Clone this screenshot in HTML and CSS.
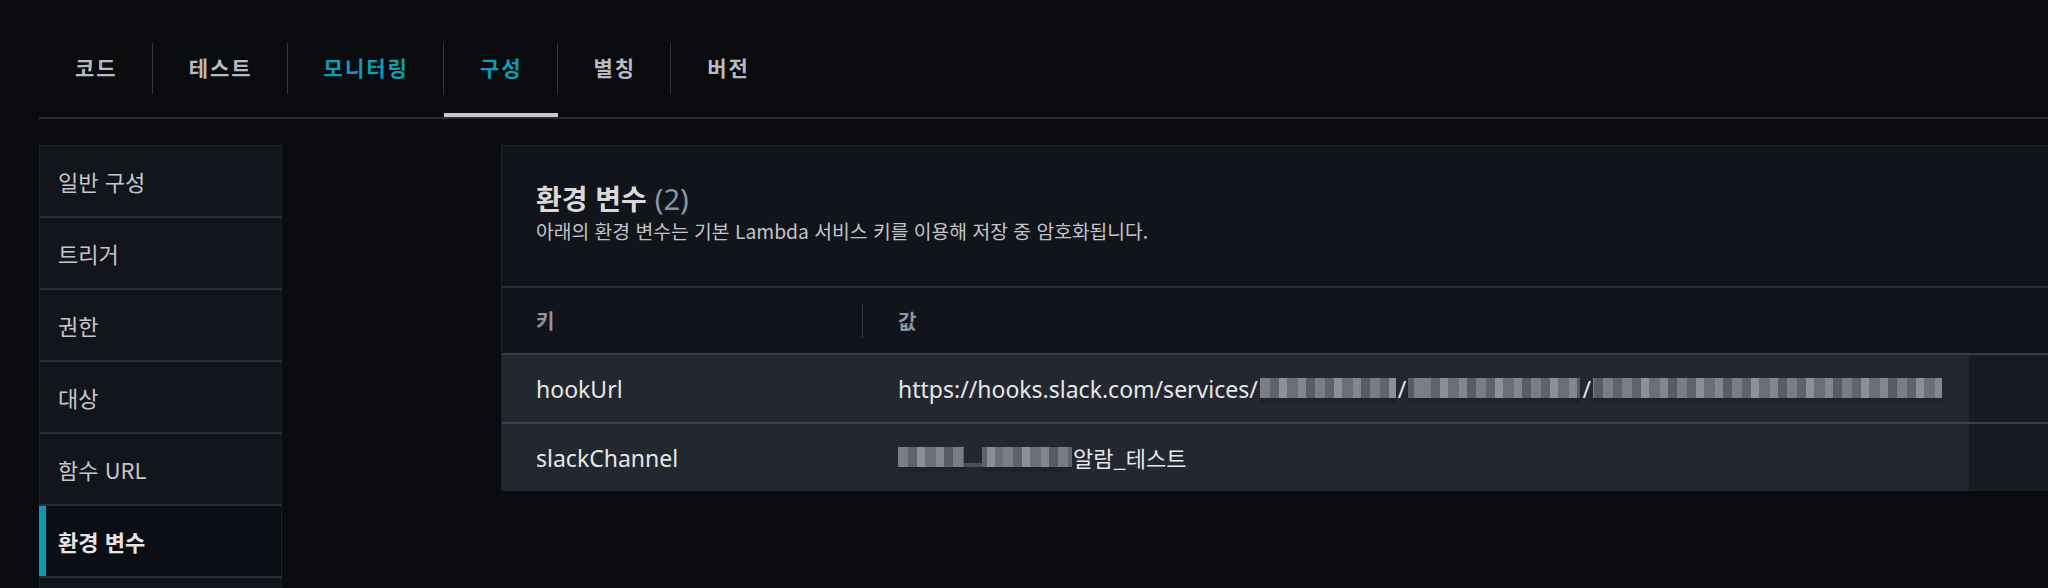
FILE: index.html
```html
<!DOCTYPE html>
<html lang="ko">
<head>
<meta charset="utf-8">
<title>환경 변수</title>
<link rel="stylesheet" href="styles.css">
</head>
<body>
<div class="page">
  <nav class="tabs">
    <div class="tab"><span class="tab-label">코드</span></div>
    <div class="tab"><span class="tab-label">테스트</span></div>
    <div class="tab link"><span class="tab-label">모니터링</span></div>
    <div class="tab link active"><span class="tab-label">구성</span></div>
    <div class="tab"><span class="tab-label">별칭</span></div>
    <div class="tab"><span class="tab-label">버전</span></div>
  </nav>
  <div class="content">
    <aside class="side">
      <div class="side-item">일반 구성</div>
      <div class="side-item">트리거</div>
      <div class="side-item">권한</div>
      <div class="side-item">대상</div>
      <div class="side-item">함수 URL</div>
      <div class="side-item active">환경 변수</div>
      <div class="side-item"></div>
    </aside>
    <section class="panel">
      <header class="panel-head">
        <h2 class="title">환경 변수 <span class="count">(2)</span></h2>
        <p class="desc">아래의 환경 변수는 기본 Lambda 서비스 키를 이용해 저장 중 암호화됩니다.</p>
      </header>
      <div class="table">
        <div class="thead">
          <div class="th key-col">키</div>
          <div class="th val-col">값</div>
        </div>
        <div class="row">
          <div class="row-inner">
            <div class="td key-col">hookUrl</div>
            <div class="td val-col">https://hooks.slack.com/services/<span class="mosaic m1"></span>/<span class="mosaic m2"></span>/<span class="mosaic m3"></span></div>
          </div>
        </div>
        <div class="row">
          <div class="row-inner">
            <div class="td key-col">slackChannel</div>
            <div class="td val-col"><span class="mosaic m4"></span><span class="gap"></span><span class="mosaic m5"></span><span class="ko">알람_테스트</span></div>
          </div>
        </div>
      </div>
    </section>
  </div>
</div>
</body>
</html>
```

FILE: styles.css
```css
html, body {
  margin: 0;
  background: #0a0b0f;
  overflow: hidden;
}

body {
  font-family: "Noto Sans CJK KR", "Noto Sans", sans-serif;
}

.page {
  padding-left: 39px;
  padding-top: 43px;
}

/* Tabs */
.tabs {
  display: flex;
  border-bottom: 2px solid #2a2c31;
}

.tab {
  height: 74px;
  box-sizing: border-box;
}

.tab-label {
  display: block;
  height: 51px;
  line-height: 49px;
  padding: 0 34px 0 36px;
  letter-spacing: 2px;
  border-right: 1px solid #33363c;
  font-size: 21px;
  font-weight: 700;
  color: #b9babf;
}

.tab:last-child .tab-label {
  border-right: none;
}

.tab.link .tab-label {
  color: #0e9db3;
}

.tab.active {
  box-shadow: inset 0 -4px 0 #c9cacd;
}

/* Content */
.content {
  display: flex;
  align-items: flex-start;
  margin-top: 26px;
}

.side {
  flex: none;
  width: 243px;
  box-sizing: border-box;
  border: 1px solid #1f2229;
  border-bottom: none;
}

.side-item {
  position: relative;
  height: 70px;
  display: flex;
  align-items: center;
  padding-left: 18px;
  border-bottom: 2px solid #2a2e36;
  background: #12151c;
  font-size: 22px;
  color: #c6c7ca;
}

.side-item.active {
  background: #0b0e14;
  font-weight: 700;
  color: #e4e4e6;
}

.side-item.active::before {
  content: "";
  position: absolute;
  left: -1px;
  top: 0;
  bottom: 0;
  width: 7px;
  background: #0a9bb0;
}

/* Panel */
.panel {
  flex: 1;
  margin-left: 219px;
  background: #11141b;
  border-left: 1px solid #1c1f26;
  border-top: 1px solid #1c1f26;
}

.panel-head {
  padding: 36px 34px 43px;
  border-bottom: 2px solid #2a2e36;
}

.title {
  margin: 0;
  font-size: 28px;
  line-height: 32px;
  font-weight: 700;
  color: #d9d9dc;
}

.count {
  font-family: "Noto Sans", sans-serif;
  font-size: 29px;
  font-weight: 400;
  color: #8a96a2;
}

.desc {
  margin: 4px 0 0;
  font-size: 19.3px;
  line-height: 24px;
  color: #c3c4c8;
}

/* Table */
.thead {
  display: flex;
  align-items: center;
  height: 65px;
}

.key-col {
  width: 360px;
  flex: none;
  box-sizing: border-box;
  padding-left: 34px;
}

.th {
  font-size: 20px;
  font-weight: 700;
  color: #8e959d;
}

.th.val-col {
  height: 34px;
  line-height: 34px;
  padding-left: 35px;
  border-left: 1px solid #363a41;
}

.row {
  display: flex;
  height: 67px;
  border-top: 2px solid #363c45;
  background: #181b22;
}

.row + .row {
  border-top-color: #3b424b;
}

.row-inner {
  width: 1467px;
  display: flex;
  align-items: center;
  background: #232830;
}

.td {
  font-family: "Noto Sans", "Noto Sans CJK KR", sans-serif;
  font-size: 23px;
  color: #e6e7e9;
  white-space: nowrap;
}

.td.val-col {
  padding-left: 36px;
}

.ko {
  font-family: "Noto Sans CJK KR", sans-serif;
  font-size: 22px;
}

.mosaic {
  display: inline-block;
  height: 20px;
  vertical-align: baseline;
  box-shadow: 0 5px 0 #1e232a;
  background-image:
    repeating-linear-gradient(90deg,
      #7a7e84 0 10px, #5f636a 10px 19px, #8c9096 19px 27px,
      #6c7076 27px 38px, #83878d 38px 46px, #585c63 46px 55px);
}

.m1 { width: 136px; margin: 0 2px; }
.m2 { width: 172px; margin: 0 2px; background-position: 13px 0; }
.m3 { width: 349px; margin-left: 2px; background-position: 29px 0; }
.m4 { width: 66px; }
.gap {
  display: inline-block;
  width: 18px;
  height: 4px;
  background: #4a4e55;
  vertical-align: baseline;
}
.m5 { width: 90px; margin-right: 1px; background-position: 21px 0; }
```
